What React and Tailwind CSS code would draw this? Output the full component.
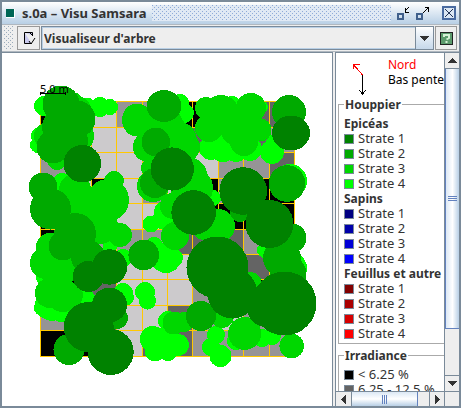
const GRID_X = [40, 66, 91, 116, 142, 167, 192, 218, 243, 269, 294];
const GRID_Y = [101, 127, 152, 178, 203, 229, 254, 279, 305, 330, 356];

// L = light, M = medium, D = dark, B = black irradiance
const CELLS = [
  "BLLMMBBDDD",
  "BLLLBMDDDM",
  "MLLLMLLMMD",
  "BLBLMLBMBB",
  "BLLLLLBBBB",
  "BMMMMDDDMB",
  "BBMLLLMDDB",
  "MBDLLLMMBB",
  "MBDLLDMLMM",
  "BBLLDDMMMM",
];
const SHADES = { L: "#cccacc", M: "#969496", D: "#646464", B: "#000000" };

// crowns: [cx, cy, rx, ry?], lowest stratum first
const STRATA = [
  {
    fill: "#00ff00",
    crowns: [
      [44, 106, 10], [88, 106, 8], [100, 107, 10], [110, 107, 8], [40, 136, 9], [38, 145, 8], [62, 182, 9],
      [50, 305, 15], [42, 308, 8], [52, 309, 12], [62, 308, 14], [42, 278, 6], [85, 302, 12], [123, 293, 10],
      [127, 298, 7], [88, 296, 6], [145, 292, 10], [147.5, 301, 8.5], [151, 224, 8.5], [165, 218, 12],
      [154, 246, 9], [166, 258, 15], [123, 258, 9], [110, 247, 7], [153, 339, 13], [155, 351, 10.5],
      [168, 351, 10], [168, 338, 12], [178, 345, 11], [168, 321, 10], [165, 212, 11], [180, 103, 9],
      [184, 113, 10], [232, 105, 9], [262, 107, 6], [211, 148, 12], [223, 148, 14], [236, 150, 12],
      [250, 149, 12], [272, 152, 12], [275, 143, 9], [290, 181, 17], [213, 198, 8], [204, 235, 5],
      [265, 250, 8], [292, 268, 15], [173, 258, 10], [216, 335, 9], [211, 347, 9], [220.5, 356, 11],
      [236, 341, 9], [262, 338, 9], [272, 336, 9],
    ],
  },
  {
    fill: "#00d700",
    crowns: [
      [72, 104, 12], [80, 107, 10], [78, 136, 16], [47, 136, 13], [57, 160, 10], [75, 190, 16], [114, 181, 10],
      [108, 200, 21], [85, 210, 23], [100, 226, 18], [120, 235, 12], [50, 247, 14], [46, 263, 16],
      [60, 268, 18], [50, 293, 15], [63, 296, 16], [70, 295, 13], [137, 120, 15, 16.5], [148, 147, 15],
      [151, 168, 10], [153, 186, 16], [170, 130, 16], [182, 137, 14], [185, 147, 15], [190, 175, 17],
      [193, 188, 20], [170, 150, 20], [173, 206, 13], [218, 226, 17], [175, 236, 14], [206, 108, 11],
      [221, 113, 18], [251, 108, 15], [209, 128, 14], [238, 128, 18], [260, 130, 11.5], [244, 142, 14],
      [204, 228, 12], [250, 284, 12], [222, 316, 12], [244.7, 333.5, 16.5], [291.7, 346, 12.3],
      [174, 323, 11.5], [184, 322, 10], [165, 125, 18], [185, 200, 16],
    ],
  },
  {
    fill: "#00aa00",
    crowns: [
      [61, 104, 18.5], [77, 119, 18.5], [60, 127, 18], [53, 147, 16.5], [70, 141, 18], [164, 106, 17.5, 16],
      [155.8, 142, 14.3], [155, 183, 15], [43, 187, 14.5], [50.5, 209, 20.5], [75, 234, 21], [63, 246, 14.5],
      [88, 257, 17], [143.7, 255, 15.3], [69, 349.5, 15.5], [117, 318, 11], [289, 112, 17],
      [287, 183.5, 18.3], [240, 212, 10], [292, 238, 14.5], [282, 258, 19], [288, 274, 18.5], [201, 316, 15],
    ],
  },
  {
    fill: "#008200",
    crowns: [
      [82.3, 163.7, 18.8], [172.3, 169, 21.6], [291, 133, 19, 17.5], [243.2, 191, 23.8], [193.7, 212.5, 22.3],
      [269.5, 224, 24], [217.5, 267.5, 31], [232.5, 293.5, 25], [284.5, 303.5, 32], [266, 308, 19],
      [109.5, 267, 17.7], [88.3, 276.5, 15.5], [109.5, 305, 17.5], [88.7, 327, 25], [110.7, 352, 23],
    ],
  },
];

const SPECIES = [
  { name: "Epicéas", colors: ["#008200", "#00aa00", "#00d700", "#00ff00"] },
  { name: "Sapins", colors: ["#000082", "#0000aa", "#0000d7", "#0000ff"] },
  { name: "Feuillus et autre", colors: ["#820000", "#aa0000", "#d70000", "#ff0000"] },
];

function TreeMap() {
  return (
    <svg width="330" height="353" viewBox="2 53 330 353" className="max-w-none" shapeRendering="crispEdges" role="img" aria-label="Visualiseur d'arbre">
      {CELLS.map((row, r) =>
        [...row].map((cell, c) => (
          <rect
            key={`${r}-${c}`}
            x={GRID_X[c]}
            y={GRID_Y[r]}
            width={GRID_X[c + 1] - GRID_X[c]}
            height={GRID_Y[r + 1] - GRID_Y[r]}
            fill={SHADES[cell]}
          />
        ))
      )}
      <g fill="#ffc800">
        {GRID_X.map((x) => <rect key={x} x={x} y="101" width="1" height="256" />)}
        {GRID_Y.map((y) => <rect key={y} x="40" y={y} width="255" height="1" />)}
      </g>
      {STRATA.map(({ fill, crowns }) => (
        <g key={fill} fill={fill}>
          {crowns.map(([cx, cy, rx, ry = rx], i) => <ellipse key={i} cx={cx} cy={cy} rx={rx} ry={ry} />)}
        </g>
      ))}
      <path d="M40.500 92v3M65.500 92v3M40 93.500h26" stroke="#000" />
      <text x="40" y="93" fontSize="11" fill="#000">5.0 m</text>
    </svg>
  );
}

function Swatch({ color, label }) {
  return (
    <li className="flex h-[15px] items-center gap-1 text-[13px] leading-[15px] whitespace-nowrap">
      <svg width="10" height="10" className="shrink-0" aria-hidden="true">
        <rect x="0.5" y="0.5" width="9" height="9" fill={color} stroke="#7a8a99" />
      </svg>
      {label}
    </li>
  );
}

function Dots({ className, id, color, background }) {
  return (
    <svg className={className} aria-hidden="true" shapeRendering="crispEdges">
      <pattern id={id} width="4" height="4" patternUnits="userSpaceOnUse">
        <rect width="4" height="4" fill={background} />
        <path d="M0 0h1v1H0zM2 2h1v1H2z" fill={color} />
      </pattern>
      <rect width="100%" height="100%" fill={`url(#${id})`} />
    </svg>
  );
}

function Arrow({ d }) {
  return <svg width="9" height="9" shapeRendering="crispEdges" aria-hidden="true"><path d={d} fill="#333" /></svg>;
}

const arrowButton = "flex shrink-0 items-center justify-center border-[#7a8a99] bg-[#eeeeee]";

export default function App() {
  return (
    <div className="flex h-screen flex-col bg-white pr-px pb-px font-['Noto_Sans',sans-serif] text-[12px] leading-[15px] text-[#333333]">
      <main className="flex min-h-0 flex-1 flex-col border-2 border-[#7a8a99] bg-[#eeeeee]">
        <header className="flex h-[22px] shrink-0 items-center bg-linear-to-b from-white to-[#b8cfe5] pl-1 pr-[3px]">
          <span className="h-[9px] w-[9px] border-r border-b border-white bg-[#006655]" />
          <h1 className="ml-[7px] text-[13px] font-bold whitespace-nowrap">s.0a – Visu Samsara</h1>
          <Dots className="mx-[5px] h-4 min-w-0 flex-1" id="title-dots" color="#8fabd8" background="#e0e9f4" />
          <div className="flex shrink-0 items-center gap-1">
            <button aria-label="Réduire">
              <svg width="15" height="16" fill="none" shapeRendering="crispEdges">
                <rect x="2" y="9" width="5" height="5" stroke="#40608c" strokeWidth="2" />
                <path d="M13 2 9 6M9 3v4h4" stroke="#000" />
              </svg>
            </button>
            <button aria-label="Agrandir">
              <svg width="15" height="16" fill="none" shapeRendering="crispEdges">
                <rect x="2" y="9" width="5" height="5" stroke="#40608c" strokeWidth="2" />
                <path d="M8 8l5-5M10 2.500h3.500v4" stroke="#000" />
              </svg>
            </button>
            <button className="ml-2" aria-label="Fermer">
              <svg width="14" height="14" fill="none">
                <rect x="1" y="1" width="12" height="12" fill="#dce7f3" stroke="#4a6ba0" strokeWidth="2" />
                <path d="m3 3 8 8M11 3l-8 8" stroke="#223355" />
              </svg>
            </button>
          </div>
        </header>

        <div className="flex h-7 shrink-0 items-center border-t border-b border-[#b0b8c0] pl-[2px] pr-[2px]">
          <Dots className="h-6 w-[10px]" id="tool-dots" color="#9aabbb" background="#eeeeee" />
          <button className="ml-[3px] flex h-6 w-[23px] items-center justify-center border border-[#999999] pl-[2px]" aria-label="Configurer">
            <svg width="15" height="15" fill="none">
              <path d="M2.500 1.500h8v3M2.500 1.500v11h7" fill="#c9c9ee" stroke="#000" />
              <path d="m8 2 3 3M7 10l2 3 4-6" stroke="#000" />
            </svg>
          </button>
          <div className="relative ml-px flex h-6 min-w-0 flex-1">
            <select
              aria-label="Vue"
              className="w-full appearance-none rounded-none border border-[#7a8a99] bg-[#eeeeee] pl-[2px] font-bold outline-none ring-1 ring-inset ring-[#b8cfe5]"
            >
              <option>Visualiseur d'arbre</option>
            </select>
            <span className="pointer-events-none absolute inset-y-px right-px flex w-[18px] items-center justify-center border-l border-[#7a8a99] bg-linear-to-b from-white to-[#c6d8ea]">
              <Arrow d="M0 2h9v1H8v1H7v1H6v1H5v1H4V6H3V5H2V4H1V3H0z" />
            </span>
          </div>
          <button className="ml-px flex h-6 w-[22px] items-center justify-center border border-[#999999]" aria-label="Aide">
            <svg width="13" height="13">
              <rect x="0.500" y="0.500" width="12" height="12" fill="#5c9a6c" stroke="#222" />
              <path d="M4 5V3h5v3L6.500 7.500M6.500 9v2" fill="none" stroke="#d5f0d5" strokeWidth="2" />
            </svg>
          </button>
        </div>

        <div className="flex min-h-0 flex-1">
          <section className="min-w-0 flex-1 overflow-hidden border border-l-0 border-b-0 border-[#7a8a99] bg-white">
            <TreeMap />
          </section>
          <aside className="ml-[2px] flex w-[124px] shrink-0 flex-col border-t border-l border-[#7a8a99]">
            <div className="flex min-h-0 flex-1">
              <div className="min-w-0 flex-1 overflow-hidden bg-white pl-[2px]">
                <div className="flex h-[44px] pl-3">
                  <svg width="22" height="44" fill="none" shapeRendering="crispEdges" aria-hidden="true">
                    <path d="M12.500 22 3 11M3.500 16v-5h6" stroke="#f00" />
                    <path d="M12.500 22v19M9 37l3.500 4 3.500-4" stroke="#000" />
                  </svg>
                  <div className="ml-4 pt-1 whitespace-nowrap">
                    <p className="text-[#ff0000]">Nord</p>
                    <p className="text-black">Bas pente</p>
                  </div>
                </div>
                <fieldset className="-mr-3 border border-[#aaaaaa] pt-1 pb-[2px] pl-[5px]">
                  <legend className="px-px font-bold">Houppier</legend>
                  {SPECIES.map(({ name, colors }) => (
                    <section key={name}>
                      <h2 className="font-bold whitespace-nowrap">{name}</h2>
                      <ul>{colors.map((color, i) => <Swatch key={color} color={color} label={`Strate ${i + 1}`} />)}</ul>
                    </section>
                  ))}
                </fieldset>
                <fieldset className="-mr-3 mt-1 border border-[#aaaaaa] pt-1 pl-[5px]">
                  <legend className="px-px font-bold">Irradiance</legend>
                  <ul>
                    <Swatch color="#000000" label="< 6.25 %" />
                    <Swatch color="#646464" label="6.25 - 12.5 %" />
                  </ul>
                </fieldset>
              </div>
              <div className="flex w-[15px] shrink-0 flex-col border-l border-[#7a8a99]">
                <button className={`${arrowButton} h-4 border-b`} aria-label="Défiler vers le haut">
                  <Arrow d="M4 2h1v1h1v1h1v1h1v1h1v1H0V6h1V5h1V4h1V3h1z" />
                </button>
                <div className="flex flex-[260] items-center justify-center border-b border-l border-[#6382bf] bg-linear-to-r from-[#dce8f5] via-white to-[#b8cfe5]">
                  <svg width="9" height="6" shapeRendering="crispEdges" aria-hidden="true"><path d="M0 .5h9M0 2.500h9M0 4.500h9" stroke="#6382bf" /></svg>
                </div>
                <div className="flex-[46]" />
                <button className={`${arrowButton} h-4 border-t`} aria-label="Défiler vers le bas">
                  <Arrow d="M0 2h9v1H8v1H7v1H6v1H5v1H4V6H3V5H2V4H1V3H0z" />
                </button>
              </div>
            </div>
            <div className="flex h-[15px] shrink-0 border-t border-[#7a8a99]">
              <button className={`${arrowButton} w-4 border-r`} aria-label="Défiler à gauche">
                <Arrow d="M2 4V5h1v1h1v1h1v1h1v1h1V0H6v1H5v1H4v1H3v1z" />
              </button>
              <div className="flex w-[66px] items-center justify-center border-r border-[#6382bf] bg-linear-to-b from-[#dce8f5] via-white to-[#b8cfe5]">
                <svg width="6" height="9" shapeRendering="crispEdges" aria-hidden="true"><path d="M.5 0v9M2.500 0v9M4.500 0v9" stroke="#6382bf" /></svg>
              </div>
              <div className="flex-1" />
              <button className={`${arrowButton} w-4 border-x`} aria-label="Défiler à droite">
                <Arrow d="M7 4V5H6v1H5v1H4v1H3v1H2V0h1v1h1v1h1v1h1v1z" />
              </button>
              <div className="w-[14px] shrink-0" />
            </div>
          </aside>
        </div>
      </main>
    </div>
  );
}
